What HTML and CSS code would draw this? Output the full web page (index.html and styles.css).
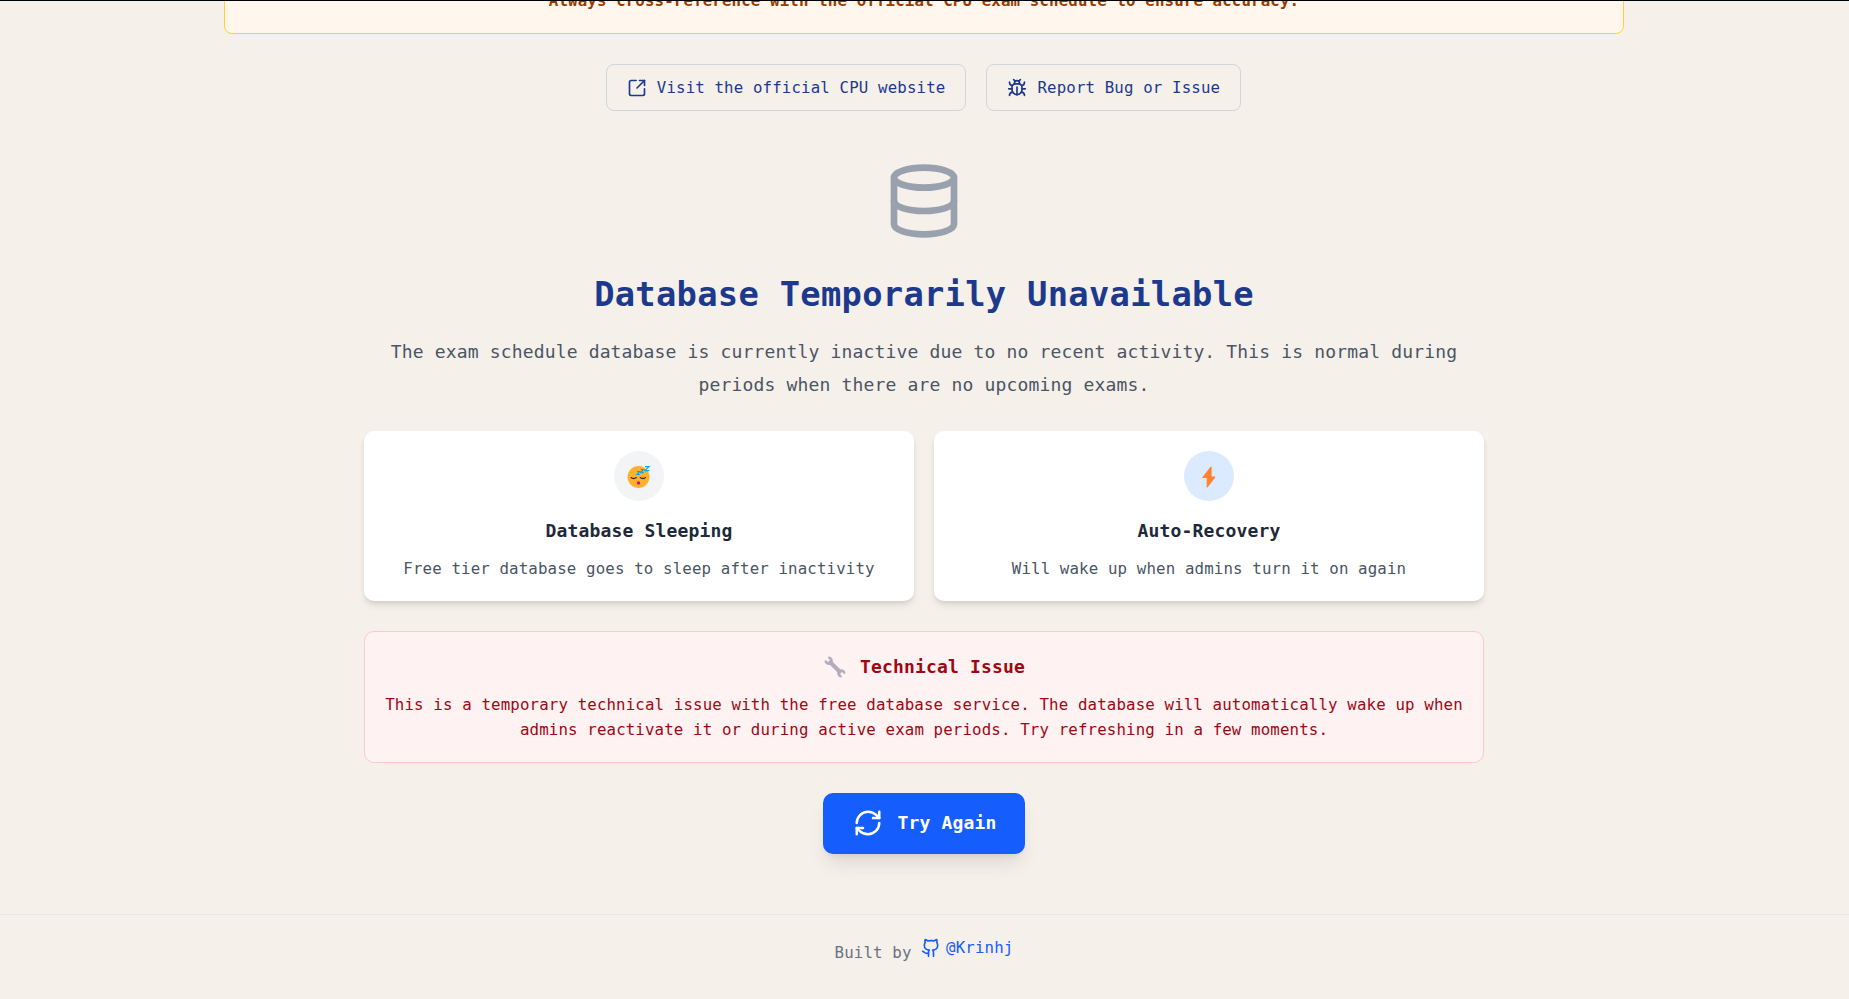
FILE: index.html
```html
<!DOCTYPE html>
<html lang="en">
<head>
<meta charset="utf-8">
<title>CPU Exam Schedule</title>
<link rel="stylesheet" href="styles.css">
</head>
<body>
<div class="notice-clip">
  <div class="notice"><strong>Always cross-reference with the official CPU exam schedule to ensure accuracy.</strong></div>
</div>
<nav class="links">
  <a class="link-btn">
    <svg class="icon" viewBox="0 0 24 24"><path d="M21 13v6a2 2 0 0 1-2 2H5a2 2 0 0 1-2-2V5a2 2 0 0 1 2-2h6"/><path d="m21 3-9 9"/><path d="M15 3h6v6"/></svg>
    <span>Visit the official CPU website</span>
  </a>
  <a class="link-btn">
    <svg class="icon" viewBox="0 0 24 24"><path d="m8 2 1.880 1.880M14.120 3.880 16 2M9 7.130v-1a3 3 0 1 1 6 0v1"/><path d="M12 20c-3.300 0-6-2.700-6-6v-3a4 4 0 0 1 4-4h4a4 4 0 0 1 4 4v3c0 3.300-2.700 6-6 6"/><path d="M12 20v-9M6.530 9C4.600 8.800 3 7.100 3 5M6 13H2M3 21c0-2.100 1.700-3.900 3.800-4M20.970 5c0 2.100-1.600 3.800-3.500 4M22 13h-4M17.200 17c2.100.1 3.800 1.900 3.800 4"/></svg>
    <span>Report Bug or Issue</span>
  </a>
</nav>
<main class="main">
  <svg class="db-icon" viewBox="0 0 24 24"><ellipse cx="12" cy="5" rx="9" ry="3"/><path d="M3 5v14a9 3 0 0 0 18 0V5"/><path d="M3 12a9 3 0 0 0 18 0"/></svg>
  <h1 class="title">Database Temporarily Unavailable</h1>
  <p class="lead">The exam schedule database is currently inactive due to no recent activity. This is normal during<br>periods when there are no upcoming exams.</p>
  <div class="cards">
    <section class="card">
      <div class="badge badge-gray">
        <svg class="emoji" viewBox="0 0 24 24"><circle cx="11.500" cy="13" r="11" fill="#ffb02e"/><path d="M4.200 13.600c1 1.200 4 1.200 5 0M13.400 13.600c1 1.200 4 1.200 5 0" fill="none" stroke="#402a32" stroke-width="1.300" stroke-linecap="round"/><circle cx="11.500" cy="19" r="1.700" fill="#bb1d80"/><path d="M10 7.500h2.600l-2.600 3h2.800M13.800 5.500h2.600l-2.600 3.200h2.900M18 2.600h4l-4 4h4.300" fill="none" stroke="#00a6ed" stroke-width="1.200"/></svg>
      </div>
      <h2 class="card-title">Database Sleeping</h2>
      <p class="card-text">Free tier database goes to sleep after inactivity</p>
    </section>
    <section class="card">
      <div class="badge badge-blue">
        <svg class="emoji" viewBox="0 0 24 24"><path d="M13.600 2.700 5.400 13.200q-.4.700.4.700h3.900v9.200q.2 1.100 1 .2L18.200 13.400q.4-.8-.4-.8h-3.200V3.100q-.2-1.100-1-.4Z" fill="#ff822d"/></svg>
      </div>
      <h2 class="card-title">Auto-Recovery</h2>
      <p class="card-text">Will wake up when admins turn it on again</p>
    </section>
  </div>
  <section class="issue">
    <h2 class="issue-title">
      <svg class="wrench" viewBox="0 0 24 24"><path d="M6 6 18 18" stroke="#b4acbc" stroke-width="4"/><path d="M5.300 2.900a2.900 2.900 0 1 1-2.500 2.600M21.200 18.600a2.900 2.900 0 1 0-2.600 2.600" fill="none" stroke="#b4acbc" stroke-width="2.500"/></svg>
      <span>Technical Issue</span>
    </h2>
    <p class="issue-text">This is a temporary technical issue with the free database service. The database will automatically wake up when<br>admins reactivate it or during active exam periods. Try refreshing in a few moments.</p>
  </section>
  <button class="retry">
    <svg class="retry-icon" viewBox="0 0 24 24"><path d="M3 12a9 9 0 0 1 9-9 9.750 9.750 0 0 1 6.740 2.740L21 8"/><path d="M21 3v5h-5"/><path d="M21 12a9 9 0 0 1-9 9 9.750 9.750 0 0 1-6.740-2.740L3 16"/><path d="M8 16H3v5"/></svg>
    <span>Try Again</span>
  </button>
</main>
<footer class="footer">
  <span class="built">Built by</span>
  <a class="author">
    <svg class="icon" viewBox="0 0 24 24"><path d="M15 22v-4a4.800 4.800 0 0 0-1-3.500c3 0 6-2 6-5.500.08-1.250-.27-2.480-1-3.500.28-1.150.28-2.350 0-3.500 0 0-1 0-3 1.500-2.640-.5-5.360-.5-8 0C6 2 5 2 5 2c-.3 1.150-.3 2.350 0 3.500A5.403 5.403 0 0 0 4 9c0 3.500 3 5.500 6 5.500-.39.49-.68 1.050-.85 1.650-.17.6-.22 1.230-.15 1.850v4"/><path d="M9 18c-4.510 2-5-2-7-2"/></svg>
    <span>@Krinhj</span>
  </a>
</footer>
</body>
</html>
```
FILE: styles.css
```css
* { box-sizing: border-box; margin: 0; padding: 0; }

body {
  height: 999px;
  overflow: hidden;
  border-top: 1px solid #000;
  background: #f5f0e9;
  font-family: "DejaVu Sans Mono", monospace;
  font-size: 15.75px;
  line-height: 25px;
}

svg { display: block; flex: none; }

span, h1, h2, p, strong { letter-spacing: .0088em; }

.notice-clip {
  display: flex;
  align-items: flex-end;
  justify-content: center;
  height: 33px;
  padding-right: 1px;
  overflow: hidden;
}

.notice {
  flex: none;
  width: 1400px;
  padding: 20px;
  border: 1px solid #ffd230;
  border-radius: 8px;
  background: #fff7ed;
  color: #973c00;
  text-align: center;
}

.links {
  display: flex;
  justify-content: center;
  gap: 20px;
  margin-top: 30px;
  padding-right: 2px;
}

.link-btn {
  display: flex;
  align-items: center;
  gap: 10px;
  padding: 10px 20px;
  border: 1px solid #d1d5dc;
  border-radius: 8px;
  color: #1c398e;
}

.icon, .db-icon, .retry-icon {
  fill: none;
  stroke: currentColor;
  stroke-width: 2;
  stroke-linecap: round;
  stroke-linejoin: round;
}

.icon { width: 20px; height: 20px; }

.main {
  display: flex;
  flex-direction: column;
  align-items: center;
  width: 1121px;
  margin: 50px auto 0;
  padding-right: 1px;
  text-align: center;
}

.db-icon { width: 80px; height: 80px; color: #99a1af; }

.title {
  margin-top: 31px;
  color: #1c398e;
  font-size: 33.75px;
  line-height: 45px;
}

.lead {
  margin-top: 19px;
  color: #4a5565;
  font-size: 18px;
  line-height: 32.5px;
}

.cards {
  display: grid;
  grid-template-columns: 1fr 1fr;
  gap: 20px;
  width: 100%;
  margin-top: 30px;
}

.card {
  display: flex;
  flex-direction: column;
  align-items: center;
  padding: 20px;
  border-radius: 10px;
  background: #fff;
  box-shadow: 0 5px 7.5px -1px rgba(0, 0, 0, .1), 0 2.5px 5px -2.5px rgba(0, 0, 0, .1);
}

.badge {
  display: flex;
  align-items: center;
  justify-content: center;
  width: 50px;
  height: 50px;
  border-radius: 50%;
}

.badge-gray { background: #f3f4f6; }
.badge-blue { background: #dbeafe; }

.emoji { width: 24px; height: 24px; }

.card-title {
  margin-top: 15px;
  color: #1e2939;
  font-size: 18px;
  line-height: 30px;
}

.card-text { margin-top: 10px; color: #4a5565; }

.issue {
  width: 100%;
  margin-top: 30px;
  padding: 20px 0;
  border: 1px solid #ffc9c9;
  border-radius: 10px;
  background: #fef2f2;
  color: #9f0712;
}

.issue-title {
  display: flex;
  align-items: center;
  justify-content: center;
  gap: 13px;
  font-size: 18px;
  line-height: 30px;
}

.wrench { width: 24px; height: 24px; }

.issue-text { margin-top: 10px; }

.retry {
  display: flex;
  align-items: center;
  gap: 15px;
  margin-top: 30px;
  padding: 15px 29px 16px 30px;
  border: 0;
  border-radius: 10px;
  background: #155dfc;
  box-shadow: 0 12.5px 18.75px -3.75px rgba(0, 0, 0, .1), 0 5px 7.5px -5px rgba(0, 0, 0, .1);
  color: #fff;
  font: bold 18px/30px "DejaVu Sans Mono", monospace;
}

.retry-icon { width: 30px; height: 30px; }

.footer {
  display: flex;
  justify-content: center;
  gap: 9.6px;
  margin-top: 60px;
  padding: 20px 1px 0 0;
  border-top: 1px solid #e5e7eb;
}

.built { padding-top: 5px; color: #6a7282; }

.author {
  display: flex;
  align-items: center;
  gap: 5px;
  height: 25px;
  color: #155dfc;
}
```
